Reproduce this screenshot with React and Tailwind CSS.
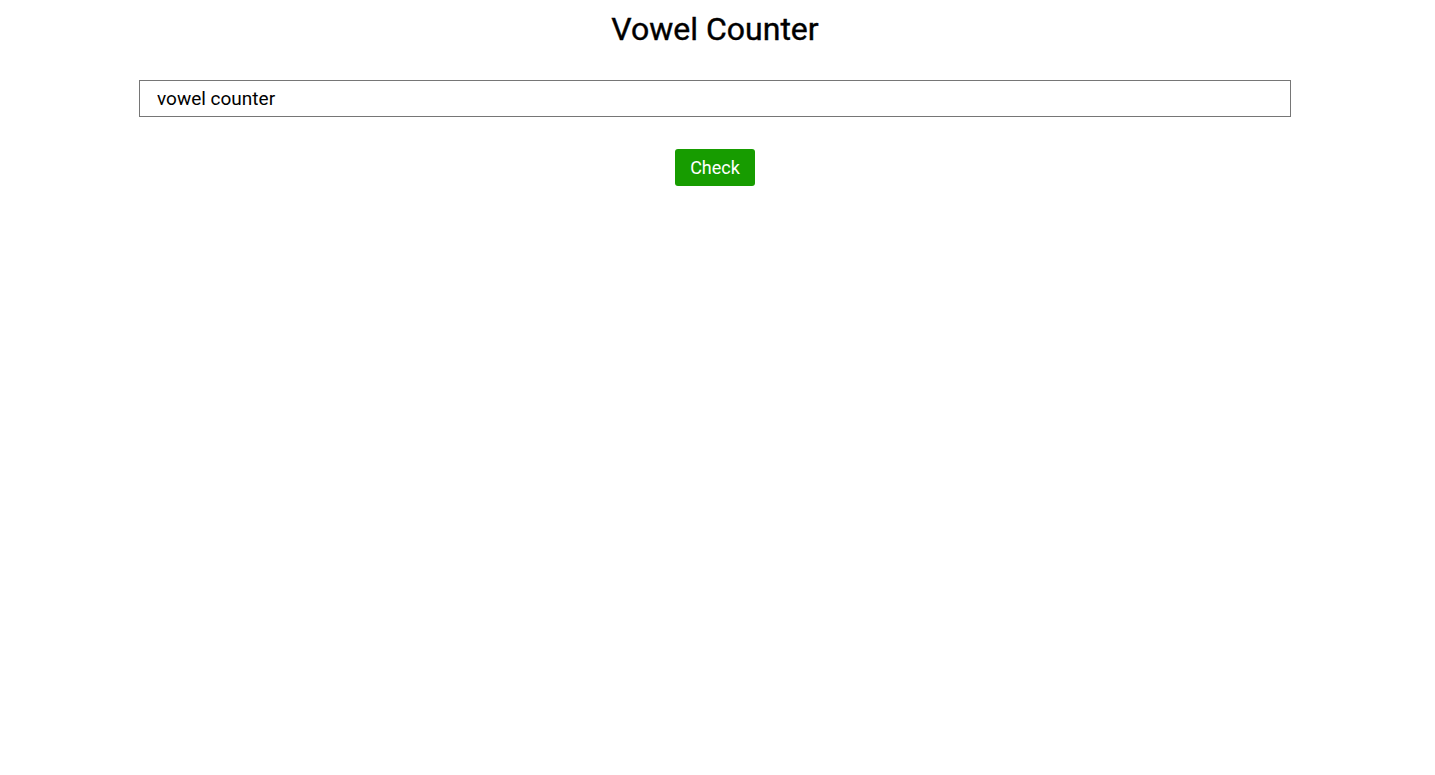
export default function App() {
  return (
    <div className="w-[1430px] min-h-screen bg-white flex flex-col items-center font-['Roboto',sans-serif] text-black">
      <h1 className="mt-[8px] text-[32px] leading-[42px] font-normal [-webkit-text-stroke:0.4px_black]">Vowel Counter</h1>
      <input
        type="text"
        defaultValue="vowel counter"
        className="mt-[30px] w-[1152px] h-[37px] border border-[#767676] px-[17px] text-[19px] outline-none"
      />
      <button className="mt-[32px] w-[80px] h-[37px] rounded-[3px] bg-[#179c00] text-white text-[18px]">
        Check
      </button>
    </div>
  );
}
